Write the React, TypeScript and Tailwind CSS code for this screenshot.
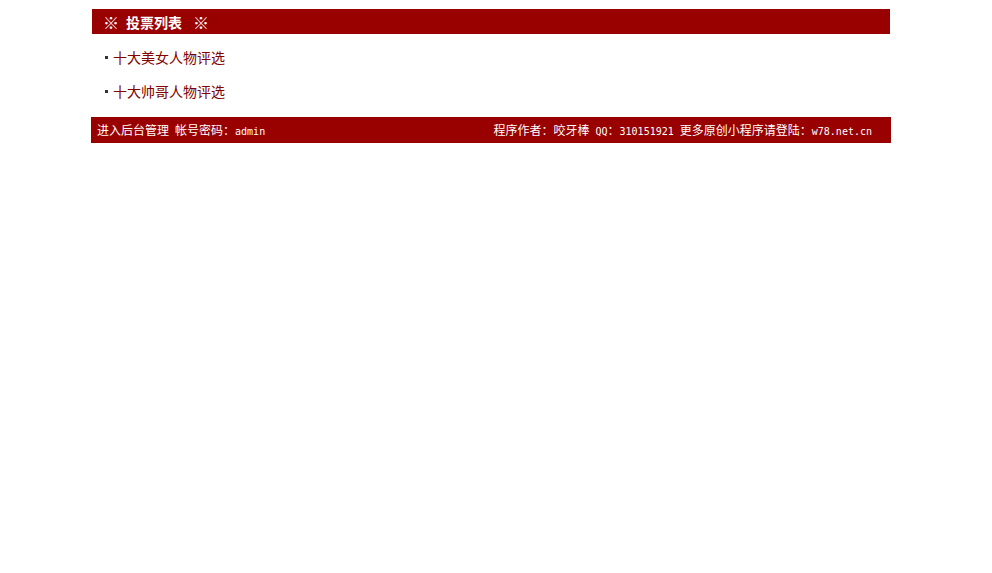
import React from "react";

const cjk = "font-['SimSun','Noto_Sans_CJK_SC',sans-serif]";

// ascii bits in the old page were half-width mono
function A({ children }: { children: React.ReactNode }) {
  return (
    <span className="font-['DejaVu_Sans_Mono',monospace] text-[10px]">
      {children}
    </span>
  );
}

const polls = ["十大美女人物评选", "十大帅哥人物评选"];

export default function App() {
  return (
    <div className={`min-h-screen bg-white ${cjk}`}>
      <div className="w-[800px] ml-[91px] pt-[9px]">
        <div className="mx-px h-[25px] bg-[#990000] flex items-center pl-[11px] text-white text-[14px] font-bold leading-none">
          <span className="text-[16px]">※</span>
          <span className="ml-[7px]">投票列表</span>
          <span className="ml-[11px] text-[16px]">※</span>
        </div>

        <ul className="pt-[13px] pb-[2px]">
          {polls.map((p) => (
            <li key={p} className="h-[34px] flex items-start pl-[14px] pt-[1px]">
              <span className="mt-[8px] w-[3px] h-[3px] bg-[#333333] mr-[5px]" />
              <a href="#" className="text-[#800000] text-[14px] leading-[18px]">
                {p}
              </a>
            </li>
          ))}
        </ul>

        <div className="h-[26px] bg-[#990000] flex items-center justify-between pl-[6px] pr-[19px] text-white text-[12px] leading-none">
          <span>
            进入后台管理<A> </A>帐号密码：<A>admin</A>
          </span>
          <span>
            程序作者：咬牙棒<A> QQ</A>：<A>310151921 </A>更多原创小程序请登陆：
            <A>w78.net.cn</A>
          </span>
        </div>
      </div>
    </div>
  );
}
